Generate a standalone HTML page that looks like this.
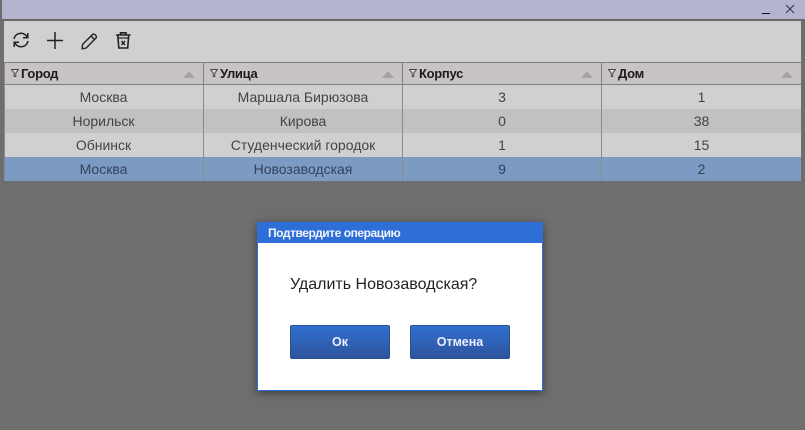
<!DOCTYPE html>
<html><head><meta charset="utf-8"><style>
html,body{margin:0;padding:0}
body{width:805px;height:430px;overflow:hidden;position:relative;background:#6e6e6e;font-family:"Liberation Sans",Arial,sans-serif}
div{position:absolute;box-sizing:border-box}
.h{top:62px;height:23px;background:#c8c3c7;border-top:1px solid #7f7f7f;border-bottom:1px solid #7f7f7f;border-right:1px solid #7f7f7f;font-weight:bold;font-size:13px;letter-spacing:-.3px;line-height:22px;color:#1b1b1b;padding-left:17px}
.h svg{position:absolute;left:7px;top:6px}
.h i{position:absolute;right:8px;top:8px;width:0;height:0;border-left:6px solid transparent;border-right:6px solid transparent;border-bottom:7px solid #a3a3a3}
.c{height:24px;line-height:24px;font-size:14px;color:#444;text-align:center;border-right:1px solid #8a8a8a}
.s{color:#34425a}
.btn{top:325px;width:100px;height:34px;border-radius:2px;border:1px solid #2a5296;background:linear-gradient(#2f6fd0,#2f549c);color:#eef;font-weight:bold;font-size:12.5px;line-height:32px;text-align:center}
</style></head><body>
<div style="left:2px;top:0;width:803px;height:19px;background:#b4b4d0"></div>
<div style="left:2px;top:19px;width:803px;height:2px;background:#6a6a6a"></div>
<div style="left:4px;top:21px;width:797px;height:41px;background:#d0d0d0"></div>
<div style="left:762px;top:13px;width:8px;height:1px;background:#111"></div>
<svg style="position:absolute;left:785px;top:4px" width="10" height="10" viewBox="0 0 10 10"><path d="M1 1L9 9M9 1L1 9" stroke="#333" stroke-width="1" fill="none"/></svg>
<svg style="position:absolute;left:12px;top:31px" width="18" height="18" viewBox="0 0 18 18" fill="none" stroke="#222" stroke-width="1.5"><path d="M2 8A7 7 0 0 1 14 4.500L15.500 6.500M15.800 2V6.800H11"/><path d="M16 10A7 7 0 0 1 4 13.500L2.500 11.500M2.200 16V11.200H7"/></svg>
<svg style="position:absolute;left:46px;top:31px" width="18" height="18" viewBox="0 0 18 18" fill="none" stroke="#222" stroke-width="1.5"><path d="M1 9.500H17M9 1V18"/></svg>
<svg style="position:absolute;left:81px;top:32px" width="18" height="18" viewBox="0 0 18 18" fill="none" stroke="#222" stroke-width="1.4"><path d="M1.500 12.500L11.500 2.500C13 1 16.500 4.300 15 6L5.200 16L1.200 16.800ZM10 4L13.500 7.500"/></svg>
<svg style="position:absolute;left:114px;top:31px" width="18" height="18" viewBox="0 0 18 18" fill="none" stroke="#222" stroke-width="1.6"><path d="M2 4H16.500M6.500 3.500V1.800H12V3.500M3.800 4.500L4.800 17H13.700L14.700 4.500"/><path d="M3.500 7H15" stroke-width="1.2"/><path d="M7.500 10L11 14M11 10L7.500 14" stroke-width="1.4"/></svg>

<div class="h" style="left:4px;width:200px"><svg width="8" height="8" viewBox="0 0 8 8"><path d="M.5.500H7.500L4.800 4V7.500H3.200V4Z" fill="#ddd" stroke="#444"/></svg>Город<i></i></div>
<div class="h" style="left:204px;width:199px;padding-left:16px"><svg style="left:6px" width="8" height="8" viewBox="0 0 8 8"><path d="M.5.500H7.500L4.800 4V7.500H3.200V4Z" fill="#ddd" stroke="#444"/></svg>Улица<i></i></div>
<div class="h" style="left:403px;width:199px;padding-left:16px"><svg style="left:6px" width="8" height="8" viewBox="0 0 8 8"><path d="M.5.500H7.500L4.800 4V7.500H3.200V4Z" fill="#ddd" stroke="#444"/></svg>Корпус<i></i></div>
<div class="h" style="left:602px;width:199px;padding-left:16px;border-right:0"><svg style="left:6px" width="8" height="8" viewBox="0 0 8 8"><path d="M.5.500H7.500L4.800 4V7.500H3.200V4Z" fill="#ddd" stroke="#444"/></svg>Дом<i></i></div>

<div style="left:4px;top:85px;width:797px;height:24px;background:#d0d0d0"></div>
<div style="left:4px;top:109px;width:797px;height:24px;background:#c1c1c1"></div>
<div style="left:4px;top:133px;width:797px;height:24px;background:#d0d0d0"></div>
<div style="left:4px;top:157px;width:797px;height:24px;background:#7b9bc3"></div>

<div class="c" style="left:4px;top:85px;width:200px">Москва</div>
<div class="c" style="left:204px;top:85px;width:199px">Маршала Бирюзова</div>
<div class="c" style="left:403px;top:85px;width:199px">3</div>
<div class="c" style="left:602px;top:85px;width:199px;border:0">1</div>
<div class="c" style="left:4px;top:109px;width:200px">Норильск</div>
<div class="c" style="left:204px;top:109px;width:199px">Кирова</div>
<div class="c" style="left:403px;top:109px;width:199px">0</div>
<div class="c" style="left:602px;top:109px;width:199px;border:0">38</div>
<div class="c" style="left:4px;top:133px;width:200px">Обнинск</div>
<div class="c" style="left:204px;top:133px;width:199px">Студенческий городок</div>
<div class="c" style="left:403px;top:133px;width:199px">1</div>
<div class="c" style="left:602px;top:133px;width:199px;border:0">15</div>
<div class="c s" style="left:4px;top:157px;width:200px">Москва</div>
<div class="c s" style="left:204px;top:157px;width:199px">Новозаводская</div>
<div class="c s" style="left:403px;top:157px;width:199px">9</div>
<div class="c s" style="left:602px;top:157px;width:199px;border:0">2</div>
<div style="left:4px;top:62px;width:1px;height:119px;background:#8a8a8a"></div>

<div style="left:257px;top:222px;width:286px;height:169px;background:#fff;border:1px solid #2d6fd6;box-shadow:0 2px 8px rgba(0,0,0,.45)"></div>
<div style="left:257px;top:222px;width:286px;height:21px;background:#2d6fd6;color:#f0f4ff;font-weight:bold;font-size:12px;letter-spacing:-.45px;line-height:22px;padding-left:11px">Подтвердите операцию</div>
<div style="left:290px;top:275px;font-size:16px;line-height:20px;color:#222;white-space:nowrap">Удалить Новозаводская?</div>
<div class="btn" style="left:290px">Ок</div>
<div class="btn" style="left:410px">Отмена</div>
</body></html>
